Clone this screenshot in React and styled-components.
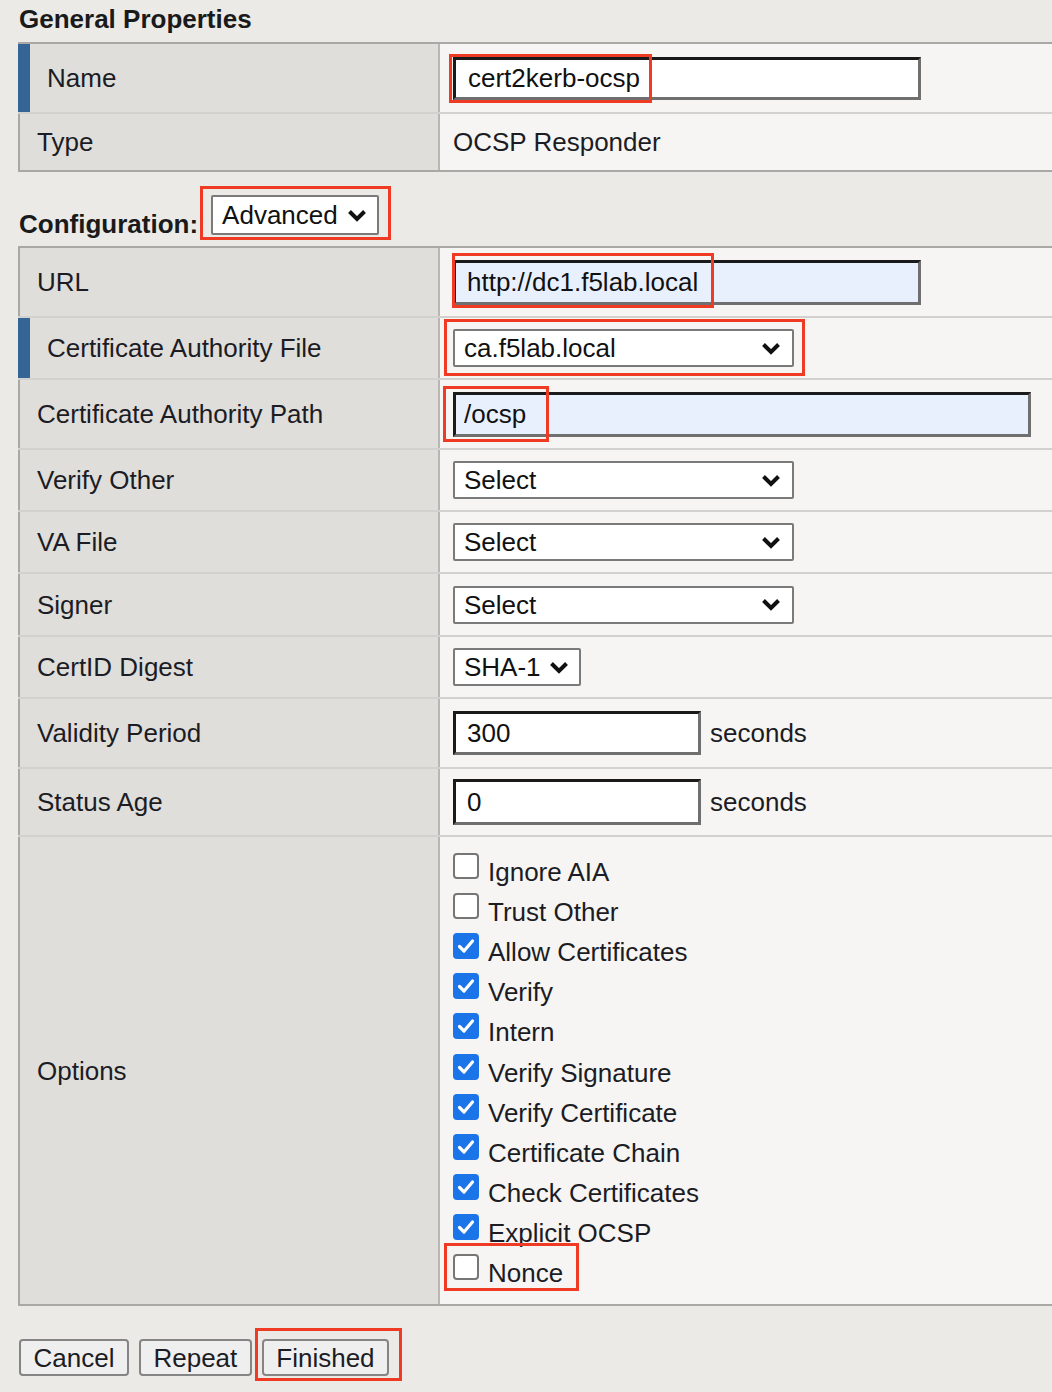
import React from "react";
import styled, { createGlobalStyle } from "styled-components";

const Global = createGlobalStyle`
  html, body { margin: 0; padding: 0; background: #ebeae7; }
  body { font-family: Arial, "Liberation Sans", sans-serif; color: #1c1c24; overflow: hidden; }
  *, *::before, *::after { box-sizing: border-box; }
`;

const Page = styled.div`
  width: 1052px;
  height: 1392px;
  overflow: hidden;
  padding-left: 18px;
  font-size: 26px;
`;

const Heading = styled.div`
  font-weight: bold;
  font-size: 26px;
  line-height: 38px;
  padding-left: 1px;
  margin-bottom: 4px;
  color: #1a1a1a;
`;

const Table = styled.div`
  width: 1042px;
  border-top: 2px solid #a9a8a5;
  border-bottom: 2px solid #a9a8a5;
`;

const Row = styled.div`
  box-sizing: content-box;
  display: grid;
  grid-template-columns: 422px 1fr;
  min-height: ${(p) => p.$h}px;
  &:not(:first-child) {
    border-top: 2px solid #d2d1ce;
  }
`;

const Label = styled.div`
  background: #dfdedb;
  border-left: ${(p) => (p.$mark ? "12px solid #356497" : "2px solid #a9a8a5")};
  border-right: 2px solid #b8b7b4;
  padding-left: 17px;
  display: flex;
  align-items: center;
  line-height: 30px;
  color: #1c1c24;
`;

const Value = styled.div`
  background: #f6f5f3;
  padding-left: 13px;
  display: flex;
  align-items: center;
  gap: 9px;
  line-height: 30px;
  color: #1c1c24;
`;

const Annot = styled.span`
  position: relative;
  display: inline-flex;
  &::after {
    content: "";
    position: absolute;
    left: ${(p) => p.$l}px;
    top: ${(p) => p.$t}px;
    width: ${(p) => p.$w}px;
    height: ${(p) => p.$h}px;
    border: 3px solid #ef3b24;
    pointer-events: none;
  }
`;

const TextInput = styled.input`
  width: ${(p) => p.$w}px;
  height: ${(p) => p.$h || 44}px;
  font-family: Arial, "Liberation Sans", sans-serif;
  font-size: 26px;
  color: #111;
  background: ${(p) => (p.$fill ? "#e8f0fe" : "#ffffff")};
  border: 3px solid;
  border-color: #1a1a1a #6f6f6f #6f6f6f #1a1a1a;
  padding: 0 0 0 ${(p) => p.$pl || 12}px;
  margin: 0;
  outline: none;
`;

const Select = styled.div`
  width: ${(p) => p.$w}px;
  height: ${(p) => p.$h || 38}px;
  display: flex;
  align-items: center;
  justify-content: space-between;
  background: #fff;
  border: 2px solid #7a7a7a;
  border-radius: 2px;
  padding: 0 ${(p) => p.$pr || 11}px 0 9px;
  font-size: 26px;
  color: #111;
  line-height: 30px;
`;

const Chevron = () => (
  <svg width="20" height="13" viewBox="0 0 20 13">
    <polyline points="2.5,2.5 10,10 17.5,2.5" fill="none" stroke="#111" strokeWidth="4" strokeLinejoin="miter" />
  </svg>
);

const ConfigRow = styled.div`
  height: 74px;
  display: flex;
  align-items: flex-start;
`;

const ConfigLabel = styled.div`
  font-weight: bold;
  line-height: 30px;
  margin-top: 37px;
  padding-left: 1px;
  color: #1a1a1a;
`;

const ConfigSelectWrap = styled.div`
  margin-top: 23px;
  margin-left: 13px;
`;

const Options = styled.div`
  display: flex;
  flex-direction: column;
  padding: 15px 0 11px;
`;

const Check = styled.div`
  height: 40.1px;
  display: flex;
  align-items: center;
  gap: 9px;
  line-height: 30px;
`;

const Box = styled.span`
  width: 26px;
  height: 26px;
  border-radius: 4px;
  margin-bottom: 12px;
  display: inline-flex;
  align-items: center;
  justify-content: center;
  background: ${(p) => (p.$on ? "#1b74e8" : "#ffffff")};
  border: ${(p) => (p.$on ? "none" : "2px solid #767676")};
  flex: none;
`;

const Tick = () => (
  <svg width="18" height="16" viewBox="0 0 18 16">
    <polyline points="2.5,8.5 7,13 15.5,3" fill="none" stroke="#fff" strokeWidth="3.2" strokeLinecap="round" strokeLinejoin="round" />
  </svg>
);

const Buttons = styled.div`
  display: flex;
  gap: 10px;
  margin-top: 33px;
  padding-left: 1px;
`;

const Button = styled.button`
  height: 37px;
  padding: 0 12.5px;
  font-family: Arial, "Liberation Sans", sans-serif;
  font-size: 26px;
  color: #1c1c24;
  background: #efefef;
  border: 2px solid #858585;
  border-radius: 4px;
  line-height: 30px;
`;

const Seconds = styled.span``;

const options = [
  ["Ignore AIA", false],
  ["Trust Other", false],
  ["Allow Certificates", true],
  ["Verify", true],
  ["Intern", true],
  ["Verify Signature", true],
  ["Verify Certificate", true],
  ["Certificate Chain", true],
  ["Check Certificates", true],
  ["Explicit OCSP", true],
];

export default function App() {
  return (
    <>
      <Global />
      <Page>
        <Heading>General Properties</Heading>
        <Table>
          <Row $h={68}>
            <Label $mark>Name</Label>
            <Value>
              <Annot $l={-4} $t={-3} $w={203} $h={49}>
                <TextInput readOnly defaultValue="cert2kerb-ocsp" $w={468} $h={43} />
              </Annot>
            </Value>
          </Row>
          <Row $h={56}>
            <Label>Type</Label>
            <Value>OCSP Responder</Value>
          </Row>
        </Table>

        <ConfigRow>
          <ConfigLabel>Configuration:</ConfigLabel>
          <ConfigSelectWrap>
            <Annot $l={-11} $t={-9} $w={191} $h={54}>
              <Select $w={168} $h={40} $pr={10}>
                <span>Advanced</span>
                <Chevron />
              </Select>
            </Annot>
          </ConfigSelectWrap>
        </ConfigRow>

        <Table>
          <Row $h={68}>
            <Label>URL</Label>
            <Value>
              <Annot $l={-1} $t={-7} $w={262} $h={55}>
                <TextInput readOnly defaultValue="http://dc1.f5lab.local" $w={468} $h={45} $fill $pl={11} />
              </Annot>
            </Value>
          </Row>
          <Row $h={60}>
            <Label $mark>Certificate Authority File</Label>
            <Value>
              <Annot $l={-9} $t={-10} $w={361} $h={57}>
                <Select $w={341}>
                  <span>ca.f5lab.local</span>
                  <Chevron />
                </Select>
              </Annot>
            </Value>
          </Row>
          <Row $h={68}>
            <Label>Certificate Authority Path</Label>
            <Value>
              <Annot $l={-10} $t={-6} $w={106} $h={56}>
                <TextInput readOnly defaultValue="/ocsp" $w={578} $h={45} $fill $pl={8} />
              </Annot>
            </Value>
          </Row>
          <Row $h={60}>
            <Label>Verify Other</Label>
            <Value>
              <Select $w={341}>
                <span>Select</span>
                <Chevron />
              </Select>
            </Value>
          </Row>
          <Row $h={60}>
            <Label>VA File</Label>
            <Value>
              <Select $w={341}>
                <span>Select</span>
                <Chevron />
              </Select>
            </Value>
          </Row>
          <Row $h={61}>
            <Label>Signer</Label>
            <Value>
              <Select $w={341}>
                <span>Select</span>
                <Chevron />
              </Select>
            </Value>
          </Row>
          <Row $h={60}>
            <Label>CertID Digest</Label>
            <Value>
              <Select $w={128} $pr={10}>
                <span>SHA-1</span>
                <Chevron />
              </Select>
            </Value>
          </Row>
          <Row $h={68}>
            <Label>Validity Period</Label>
            <Value>
              <TextInput readOnly defaultValue="300" $w={248} $h={44} $pl={11} />
              <Seconds>seconds</Seconds>
            </Value>
          </Row>
          <Row $h={66}>
            <Label>Status Age</Label>
            <Value>
              <TextInput readOnly defaultValue="0" $w={248} $h={46} $pl={11} />
              <Seconds>seconds</Seconds>
            </Value>
          </Row>
          <Row $h={467}>
            <Label>Options</Label>
            <Value>
              <Options>
                {options.map(([t, on]) => (
                  <Check key={t}>
                    <Box $on={on}>{on && <Tick />}</Box>
                    <span>{t}</span>
                  </Check>
                ))}
                <Annot $l={-9} $t={-10} $w={135} $h={48}>
                  <Check>
                    <Box />
                    <span>Nonce</span>
                  </Check>
                </Annot>
              </Options>
            </Value>
          </Row>
        </Table>

        <Buttons>
          <Button>Cancel</Button>
          <Button>Repeat</Button>
          <Annot $l={-7} $t={-11} $w={147} $h={53}>
            <Button>Finished</Button>
          </Annot>
        </Buttons>
      </Page>
    </>
  );
}
